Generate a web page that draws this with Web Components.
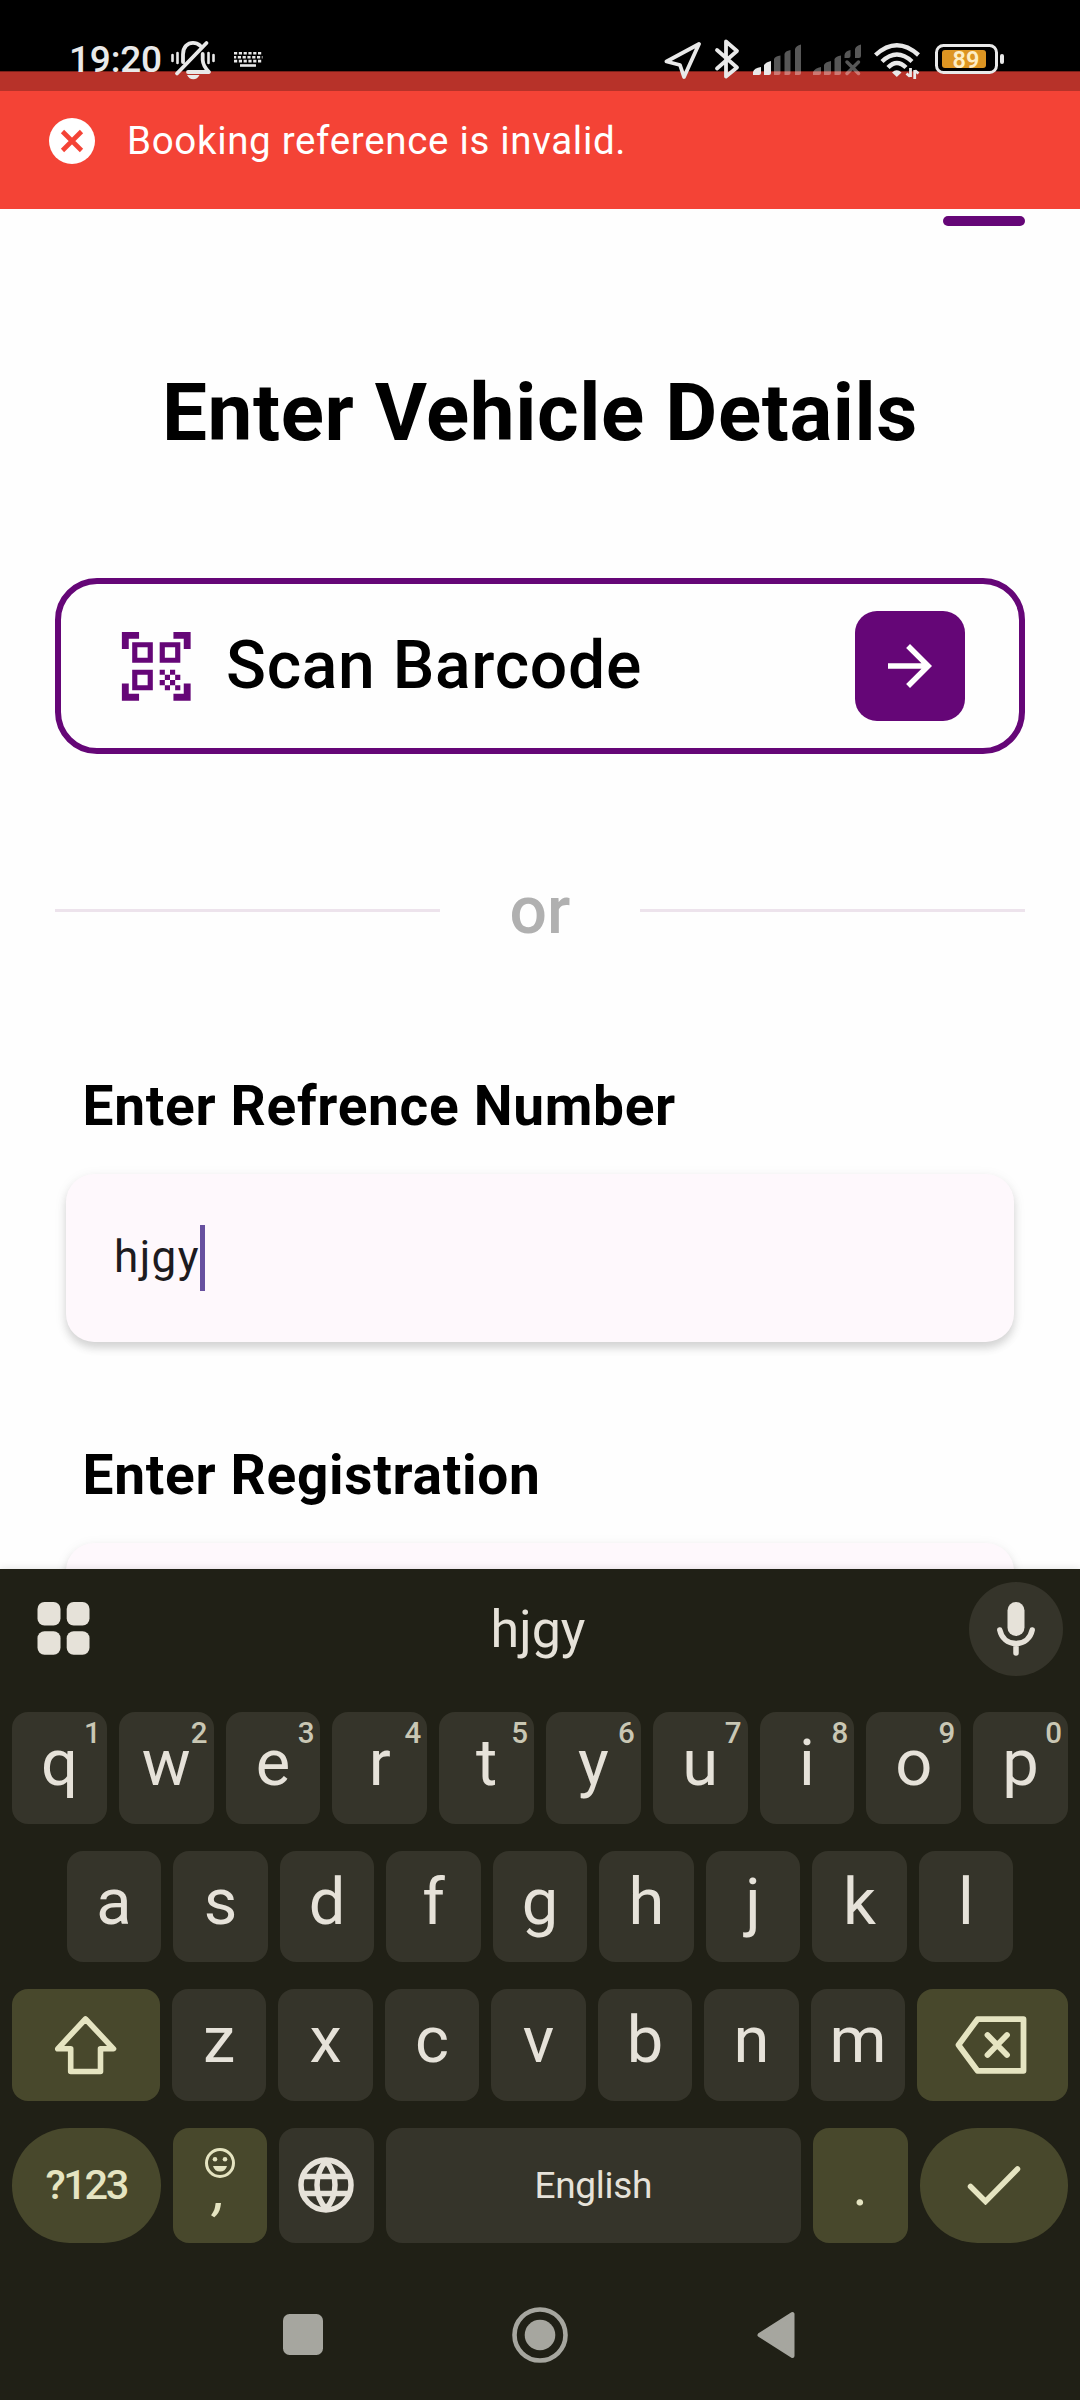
<!DOCTYPE html>
<html lang="en">
<head>
  <meta charset="UTF-8">
  <title>Vehicle Details</title>
  <style>
    body {
      margin: 0;
      width: 1080px;
      height: 2400px;
      overflow: hidden;
      background: #fefefe;
      font-family: Roboto, 'Liberation Sans', sans-serif;
      --primary: #650677;
      --danger: #f44336;
      --kb-bg: #202016;
      --kb-key: #35342a;
      --kb-accent: #48482c;
      --kb-text: #e6e2d9;
      --kb-accent-text: #e5e4c1;
    }
  </style>
</head>
<body>
  <app-screen></app-screen>

  <script>
    // view box + shapes of every icon, one unit is one pixel unless a size is given
    const ICONS = {
      bell: ['171 40 44 40', `
        <g fill="none" stroke="currentColor" stroke-linecap="round" stroke-linejoin="round">
          <path stroke-width="3.8" d="M206.5 43 177 73.500M183 62V54.500C183 46.500 188 42.800 193 42.800C196 42.800 198 43.700 200 45.500M202.700 54V60C203 66 206 69 209 72H188"/>
          <path stroke-width="2.600" d="M172.500 55V61M177.500 53V63M208.500 53V63M213.500 55V61"/>
        </g>
        <path fill="currentColor" d="M187 75H199.500Q197.500 79.200 193.300 79.200T187 75Z"/>`],
      keyboard: ['234 51 29 17', `
        <g stroke="currentColor" stroke-width="2.6" fill="none">
          <path stroke-dasharray="3.2 1.6" d="M234 53.300H262.500M234 61.100H262.500"/>
          <path stroke-dasharray="3.2 1.6" stroke-dashoffset="1" d="M234 57.200H262.500"/>
          <path d="M240 65.500H256"/>
        </g>`],
      location: ['664 41 38 40', `<path fill="none" stroke="currentColor" stroke-width="3.800" stroke-linejoin="round" d="M699 44 666.500 61.500 680 65 684 77Z"/>`],
      bluetooth: ['714 39 26 41', `<path fill="none" stroke="currentColor" stroke-width="3.800" stroke-linejoin="round" stroke-linecap="round" d="M717 50 737 67.500 726 76.500V41.500L737 51 717 68.500"/>`],
      signal: ['753 44 48 32', `
        <path fill="currentColor" d="M753 75V72Q754 68 761 67V73Q761 75 759 75ZM764 75V65Q766 62 771 61V73Q771 75 769 75Z"/>
        <path fill="#fff" fill-opacity=".34" d="M774 75V59Q775 56 780.500 55.500V73Q780.500 75 778.500 75ZM784.500 75V54Q785 51 790.500 50V73Q790.500 75 788.500 75ZM795 75V49Q796 45.500 801 44.500V73Q801 75 799 75Z"/>`],
      nosignal: ['813 44 48 32', `
        <g fill="#fff" fill-opacity=".34">
          <path d="M813 75V72Q815 68 821 67V73Q821 75 819 75ZM824 75V65Q825 62 831 61V73Q831 75 829 75ZM834.500 75V59Q836 56 841 55.500V73Q841 75 839 75ZM844.500 58V55Q845 51 850.500 50V56Q850.500 58 848.500 58ZM855 58V49Q856 45.500 861 44.500V56Q861 58 859 58Z"/>
        </g>
        <path stroke="#fff" stroke-opacity=".34" stroke-width="3.500" stroke-linecap="round" d="M847 62 858.500 73.500M858.500 62 847 73.500"/>`],
      wifi: ['873 42 47 38', `
        <g fill="none" stroke="currentColor" stroke-width="4.400">
          <path d="M875.500 55Q896.800 35.500 918.500 55"/>
          <path d="M882 61.500Q896.800 47.500 912 61.500"/>
          <path d="M888 67.500Q896.800 58.500 906 67.500"/>
        </g>
        <path fill="currentColor" d="M892 72.500Q896.800 68 901.500 72.500L896.800 77Z"/>
        <path fill="none" stroke="currentColor" stroke-width="2.800" d="M910.500 68V77M906.500 73.500 910 76.500M914.700 79V70M918.500 73.500 915 70.500"/>`],
      battery: ['934 43 71 32', `
        <rect x="936.500" y="45.500" width="60" height="27" rx="7" fill="none" stroke="currentColor" stroke-width="3"/>
        <rect x="942" y="50" width="44" height="18" rx="3" fill="#dd9522"/>
        <rect x="1000" y="54" width="4" height="10" rx="2" fill="currentColor"/>
        <text x="966" y="68" font-size="23.500" font-weight="600" text-anchor="middle" fill="#fdeec6">89</text>`],
      error: ['48 117 46 46', `
        <circle cx="71" cy="140" r="23" fill="#fff"/>
        <path fill="none" stroke="#f44336" stroke-width="4.600" d="M61.500 130.500 80.500 149.500M80.500 130.500 61.500 149.500"/>`],
      qr: ['0 0 24 24', `<path fill="currentColor" d="M9.500 6.500v3h-3v-3h3M11 5H5v6h6V5zM9.500 14.500v3h-3v-3h3M11 13H5v6h6v-6zM17.500 6.500v3h-3v-3h3M19 5h-6v6h6V5zM13 13h1.500v1.500H13V13zM14.500 14.500H16V16h-1.500v-1.500zM16 13h1.500v1.500H16V13zM13 16h1.500v1.500H13V16zM14.500 17.500H16V19h-1.500v-1.500zM16 16h1.500v1.500H16V16zM17.500 14.500H19V16h-1.500v-1.500zM17.500 17.500H19V19h-1.500v-1.500zM22 7h-2V4h-3V2h5v5zM22 22v-5h-2v3h-3v2h5zM2 22h5v-2H4v-3H2v5zM2 2v5h2V4h3V2H2z"/>`, 82.5],
      forward: ['0 0 24 24', `<path fill="currentColor" d="M12 4l-1.410 1.410L16.170 11H4v2h12.170l-5.580 5.590L12 20l8-8z"/>`, 66],
      apps: ['0 0 53 53', `
        <g fill="currentColor">
          <rect x=".5" width="23" height="23.500" rx="7"/><rect x="29.700" width="22.800" height="23.500" rx="7"/>
          <rect x=".5" y="29.300" width="23" height="23.500" rx="7"/><rect x="29.700" y="29.300" width="22.800" height="23.500" rx="7"/>
        </g>`],
      mic: ['0 0 40 54', `
        <rect x="11.500" width="17" height="34" rx="8.500" fill="currentColor"/>
        <path fill="none" stroke="currentColor" stroke-width="5.500" stroke-linecap="round" d="M3.800 28C5.500 36 11.500 41.500 20 41.500S34.500 36 36.200 28M20 42V51"/>`],
      shift: ['0 0 66 66', `<path fill="none" stroke="currentColor" stroke-width="5.600" stroke-linejoin="round" d="M32.500 7 60.500 36.800H47.500V59.500H17.700V36.800H4.700Z"/>`],
      backspace: ['0 0 76 66', `
        <g fill="none" stroke="currentColor" stroke-width="5.800" stroke-linejoin="round" stroke-linecap="round">
          <path d="M5.500 33 24.500 7.200H70.500V58.800H24.500Z"/>
          <path d="M34.500 23 54 43M54 23 34.500 43"/>
        </g>`],
      smiley: ['0 0 30 30', `
        <circle cx="15" cy="15" r="13.500" fill="none" stroke="currentColor" stroke-width="3"/>
        <circle cx="10" cy="11.200" r="2.300" fill="currentColor"/><circle cx="20" cy="11.200" r="2.300" fill="currentColor"/>
        <path fill="currentColor" d="M8 18H22Q20.500 23.500 15 23.500T8 18Z"/>`],
      globe: ['0 0 56 56', `
        <g fill="none" stroke="currentColor" stroke-width="5.500">
          <circle cx="28" cy="28" r="25"/>
          <path d="M6 19.500H50M6 36.500H50M28 4C16 18 16 38 28 52M28 4C40 18 40 38 28 52"/>
        </g>`],
      check: ['0 0 54 40', `<path fill="none" stroke="currentColor" stroke-width="5.500" stroke-linecap="round" d="M3.500 21.500 18.500 36.500 50.500 4"/>`],
      recents: ['0 0 40 41', `<rect width="40" height="41" rx="6.500" fill="currentColor"/>`],
      home: ['0 0 56 56', `
        <circle cx="28" cy="28" r="25.500" fill="none" stroke="currentColor" stroke-width="4.600"/>
        <circle cx="28" cy="28" r="15.300" fill="currentColor"/>`],
      back: ['0 0 38 48', `<path fill="currentColor" stroke="currentColor" stroke-width="4" stroke-linejoin="round" d="M2.500 24 35.500 3V45Z"/>`],
    };

    class UiIcon extends HTMLElement {
      constructor() {
        super();
        this.attachShadow({ mode: 'open' });
      }

      connectedCallback() {
        const [box, shapes, size] = ICONS[this.getAttribute('name')];
        const [, , w, h] = box.split(' ');
        this.shadowRoot.innerHTML = `
          <style>
            :host { display: block; flex: none; }
            svg { display: block; }
          </style>
          <svg viewBox="${box}" width="${size || w}" height="${size || h}">${shapes}</svg>
        `;
      }
    }

    class StatusBar extends HTMLElement {
      constructor() {
        super();
        this.attachShadow({ mode: 'open' });
        this.shadowRoot.innerHTML = `
          <style>
            :host {
              display: flex;
              justify-content: space-between;
              height: 91px;
              box-sizing: border-box;
              padding: 0 75px 0 69px;
              background: linear-gradient(#000 71px, #7a2019 71px, #7a2019 72px, #b73229 72px);
              color: #e9e9e9;
            }
            .side { display: flex; align-items: flex-start; }
            .time { font-size: 37px; line-height: 44px; font-weight: 500; margin-top: 38px; width: 102px; letter-spacing: -0.2px; }
            ui-icon { margin-top: 40px; }
            .kb { margin: 51px 0 0 19px; }
            .loc { margin-top: 41px; }
            .bt { margin: 39px 0 0 12px; }
            .sig { margin: 44px 0 0 13px; }
            .nosig { margin: 44px 0 0 12px; }
            .wifi { margin: 42px 0 0 12px; }
            .bat { margin: 43px 0 0 14px; }
          </style>
          <div class="side">
            <span class="time">19:20</span>
            <ui-icon name="bell"></ui-icon>
            <ui-icon class="kb" name="keyboard"></ui-icon>
          </div>
          <div class="side">
            <ui-icon class="loc" name="location"></ui-icon>
            <ui-icon class="bt" name="bluetooth"></ui-icon>
            <ui-icon class="sig" name="signal"></ui-icon>
            <ui-icon class="nosig" name="nosignal"></ui-icon>
            <ui-icon class="wifi" name="wifi"></ui-icon>
            <ui-icon class="bat" name="battery"></ui-icon>
          </div>
        `;
      }
    }

    class SnackBar extends HTMLElement {
      constructor() {
        super();
        this.attachShadow({ mode: 'open' });
        this.shadowRoot.innerHTML = `
          <style>
            :host {
              display: flex;
              align-items: center;
              gap: 32px;
              height: 118px;
              box-sizing: border-box;
              padding: 0 48px 19px 49px;
              background: var(--danger);
              color: #fff;
              font-size: 38.5px;
              letter-spacing: 0.68px;
            }
          </style>
          <ui-icon name="error"></ui-icon>
          <span><slot></slot></span>
        `;
      }
    }

    class ScanButton extends HTMLElement {
      constructor() {
        super();
        this.attachShadow({ mode: 'open' });
        this.shadowRoot.innerHTML = `
          <style>
            :host {
              display: flex;
              align-items: center;
              height: 176px;
              box-sizing: border-box;
              padding: 0 54px;
              border: 6px solid var(--primary);
              border-radius: 42px;
            }
            .qr { color: var(--primary); }
            .label { flex: 1; margin: -2px 0 0 28.5px; font-size: 66px; font-weight: 500; letter-spacing: 0.7px; }
            .go {
              display: flex;
              align-items: center;
              justify-content: center;
              width: 110px;
              height: 110px;
              border-radius: 22px;
              background: var(--primary);
              color: #fff;
            }
          </style>
          <ui-icon class="qr" name="qr"></ui-icon>
          <span class="label"><slot></slot></span>
          <span class="go"><ui-icon name="forward"></ui-icon></span>
        `;
      }
    }

    class OrDivider extends HTMLElement {
      constructor() {
        super();
        this.attachShadow({ mode: 'open' });
        this.shadowRoot.innerHTML = `
          <style>
            :host { display: flex; align-items: center; height: 77px; }
            i { flex: 1; height: 3px; background: #ede3ec; }
            span { width: 200px; text-align: center; font-size: 66px; font-weight: 500; line-height: 77px; color: #b0b0b0; }
          </style>
          <i></i><span><slot></slot></span><i></i>
        `;
      }
    }

    class TextField extends HTMLElement {
      constructor() {
        super();
        this.attachShadow({ mode: 'open' });
      }

      connectedCallback() {
        const value = this.getAttribute('value');
        this.shadowRoot.innerHTML = `
          <style>
            :host { display: block; padding: 0 11px; }
            .label { margin: 0 16.5px 36px; font-size: 55px; line-height: 64px; font-weight: 700; color: #000; letter-spacing: 0.7px; }
            .card {
              display: flex;
              align-items: center;
              height: 168px;
              box-sizing: border-box;
              padding: 0 46px 0 48px;
              border-radius: 28px;
              background: #fef8fc;
              box-shadow: 0 6px 8px rgba(0, 0, 0, 0.13), 0 3px 14px rgba(0, 0, 0, 0.07);
              color: #1d1b20;
              font-size: 44px;
              letter-spacing: 1.4px;
            }
            .value { margin-bottom: 3px; }
            .caret { width: 5.5px; height: 66px; background: #67509f; }
          </style>
          <div class="label"><slot></slot></div>
          <div class="card">${value ? `<span class="value">${value}</span><span class="caret"></span>` : ''}</div>
        `;
      }
    }

    class KeyCap extends HTMLElement {
      constructor() {
        super();
        this.attachShadow({ mode: 'open' });
      }

      connectedCallback() {
        const hint = this.getAttribute('hint');
        this.shadowRoot.innerHTML = `
          <style>
            :host {
              position: relative;
              display: flex;
              flex: 1 1 0;
              align-items: center;
              justify-content: center;
              box-sizing: border-box;
              padding-bottom: 9px;
              border-radius: 16px;
              background: var(--kb-key);
              color: var(--kb-text);
              font-size: 65px;
            }
            :host([accent]) { background: var(--kb-accent); color: var(--kb-accent-text); }
            :host([wide]) { flex: 0 0 148.5px; }
            :host([fixed]) { flex: 0 0 94.5px; }
            :host([round]) { border-radius: 58px; }
            :host([icon]) { padding-bottom: 0; }
            :host([icon="backspace"]) { padding-right: 3px; }
            :host([kind="symbols"]) { font-size: 41.5px; font-weight: 500; letter-spacing: -2.4px; padding-bottom: 1px; }
            :host([kind="space"]) { font-size: 37px; letter-spacing: -0.3px; padding-bottom: 0; }
            :host([kind="dot"]) { font-size: 58px; padding-bottom: 0; }
            :host([kind="comma"]) { flex-direction: column; justify-content: flex-start; font-size: 52px; font-weight: 500; line-height: 28px; font-style: italic; padding: 20px 0 0; }
            .hint {
              position: absolute;
              top: 4px;
              right: 6px;
              font-size: 29.5px;
              line-height: 35px;
              font-weight: 500;
              color: #c9c7b4;
            }
          </style>
          ${this.hasAttribute('icon') ? `<ui-icon name="${this.getAttribute('icon')}"></ui-icon>` : ''}
          ${hint ? `<span class="hint">${hint}</span>` : ''}
          <slot></slot>
        `;
      }
    }

    class SoftKeyboard extends HTMLElement {
      constructor() {
        super();
        this.attachShadow({ mode: 'open' });
        const keys = (letters) => [...letters].map((c) => `<key-cap fixed>${c}</key-cap>`).join('');
        const top = [...'qwertyuiop'].map((c, i) => `<key-cap hint="${(i + 1) % 10}">${c}</key-cap>`).join('');
        this.shadowRoot.innerHTML = `
          <style>
            :host {
              position: relative;
              display: block;
              height: 831px;
              background: var(--kb-bg);
              color: var(--kb-text);
              box-shadow: 0 0 8px rgba(0, 0, 0, 0.12);
            }
            .suggestions {
              display: flex;
              align-items: center;
              justify-content: space-between;
              height: 120px;
              padding: 0 17px 0 37px;
            }
            .apps { margin-bottom: 1px; }
            .word { font-size: 52px; padding-left: 17px; }
            .mic {
              display: flex;
              align-items: center;
              justify-content: center;
              width: 94px;
              height: 94px;
              border-radius: 50%;
              background: var(--kb-key);
            }
            .rows { display: flex; flex-direction: column; gap: 27px; padding: 23px 12px 0; }
            .row { display: flex; justify-content: center; gap: 12px; height: 111.5px; }
            .bottom { height: 115px; }
            .nav {
              display: flex;
              align-items: center;
              justify-content: center;
              gap: 189px;
              height: 56px;
              margin-top: 64px;
              padding-right: 3px;
              color: #a6a69f;
            }
          </style>
          <div class="suggestions">
            <ui-icon class="apps" name="apps"></ui-icon>
            <span class="word">hjgy</span>
            <span class="mic"><ui-icon name="mic"></ui-icon></span>
          </div>
          <div class="rows">
            <div class="row">${top}</div>
            <div class="row">${keys('asdfghjkl')}</div>
            <div class="row">
              <key-cap icon="shift" accent></key-cap>
              ${keys('zxcvbnm')}
              <key-cap icon="backspace" accent></key-cap>
            </div>
            <div class="row bottom">
              <key-cap kind="symbols" accent round wide>?123</key-cap>
              <key-cap kind="comma" icon="smiley" accent fixed>,</key-cap>
              <key-cap icon="globe" fixed></key-cap>
              <key-cap kind="space">English</key-cap>
              <key-cap kind="dot" accent fixed>.</key-cap>
              <key-cap icon="check" accent round wide></key-cap>
            </div>
          </div>
          <div class="nav">
            <ui-icon name="recents"></ui-icon>
            <ui-icon name="home"></ui-icon>
            <ui-icon name="back"></ui-icon>
          </div>
        `;
      }
    }

    class AppScreen extends HTMLElement {
      constructor() {
        super();
        this.attachShadow({ mode: 'open' });
        this.shadowRoot.innerHTML = `
          <style>
            :host { display: block; }
            main { height: 1360px; box-sizing: border-box; padding: 7px 55px 0; overflow: hidden; color: #000; }
            .tab { width: 82px; height: 10px; margin-left: auto; border-radius: 5px; background: var(--primary); }
            h1 { margin: 140px 0 118px; font-size: 80px; line-height: 94px; font-weight: 700; text-align: center; letter-spacing: 0.6px; }
            or-divider { margin: 118px 0 125px; }
            text-field + text-field { margin-top: 101px; }
          </style>
          <status-bar></status-bar>
          <snack-bar>Booking reference is invalid.</snack-bar>
          <main>
            <div class="tab"></div>
            <h1>Enter Vehicle Details</h1>
            <scan-button>Scan Barcode</scan-button>
            <or-divider>or</or-divider>
            <text-field value="hjgy">Enter Refrence Number</text-field>
            <text-field>Enter Registration</text-field>
          </main>
          <soft-keyboard></soft-keyboard>
        `;
      }
    }

    customElements.define('ui-icon', UiIcon);
    customElements.define('status-bar', StatusBar);
    customElements.define('snack-bar', SnackBar);
    customElements.define('scan-button', ScanButton);
    customElements.define('or-divider', OrDivider);
    customElements.define('text-field', TextField);
    customElements.define('key-cap', KeyCap);
    customElements.define('soft-keyboard', SoftKeyboard);
    customElements.define('app-screen', AppScreen);
  </script>
</body>
</html>
